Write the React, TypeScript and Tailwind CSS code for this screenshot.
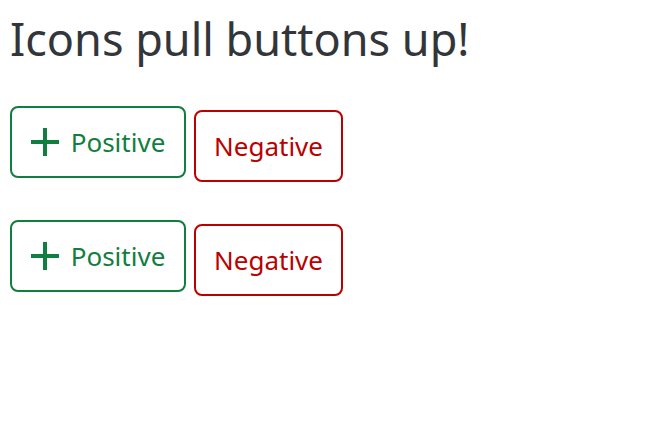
const Plus = () => (
  <svg width="28" height="28" viewBox="0 0 28 28" className="shrink-0">
    <path d="M14 0v28M0 14h28" stroke="currentColor" strokeWidth="4" />
  </svg>
);

const ButtonRow = () => (
  <div className="flex items-start gap-2">
    <button className="flex h-[72px] w-[176px] items-center justify-center gap-[12px] rounded-lg border-2 border-[#107e3e] bg-white text-[26px] text-[#107e3e]">
      <Plus />
      <span>Positive</span>
    </button>
    <button className="mt-1 flex h-[72px] w-[149px] items-center justify-center rounded-lg border-2 border-[#bb0000] bg-white text-[26px] text-[#bb0000]">
      Negative
    </button>
  </div>
);

export default function App() {
  return (
    <div className="h-[426px] w-[660px] bg-white px-[10px] font-['Noto_Sans',sans-serif]">
      <h1 className="pt-[8px] text-[45px] leading-[62px] text-[#32363a]">Icons pull buttons up!</h1>
      <div className="mt-[36px] flex flex-col gap-[38px]">
        <ButtonRow />
        <ButtonRow />
      </div>
    </div>
  );
}
